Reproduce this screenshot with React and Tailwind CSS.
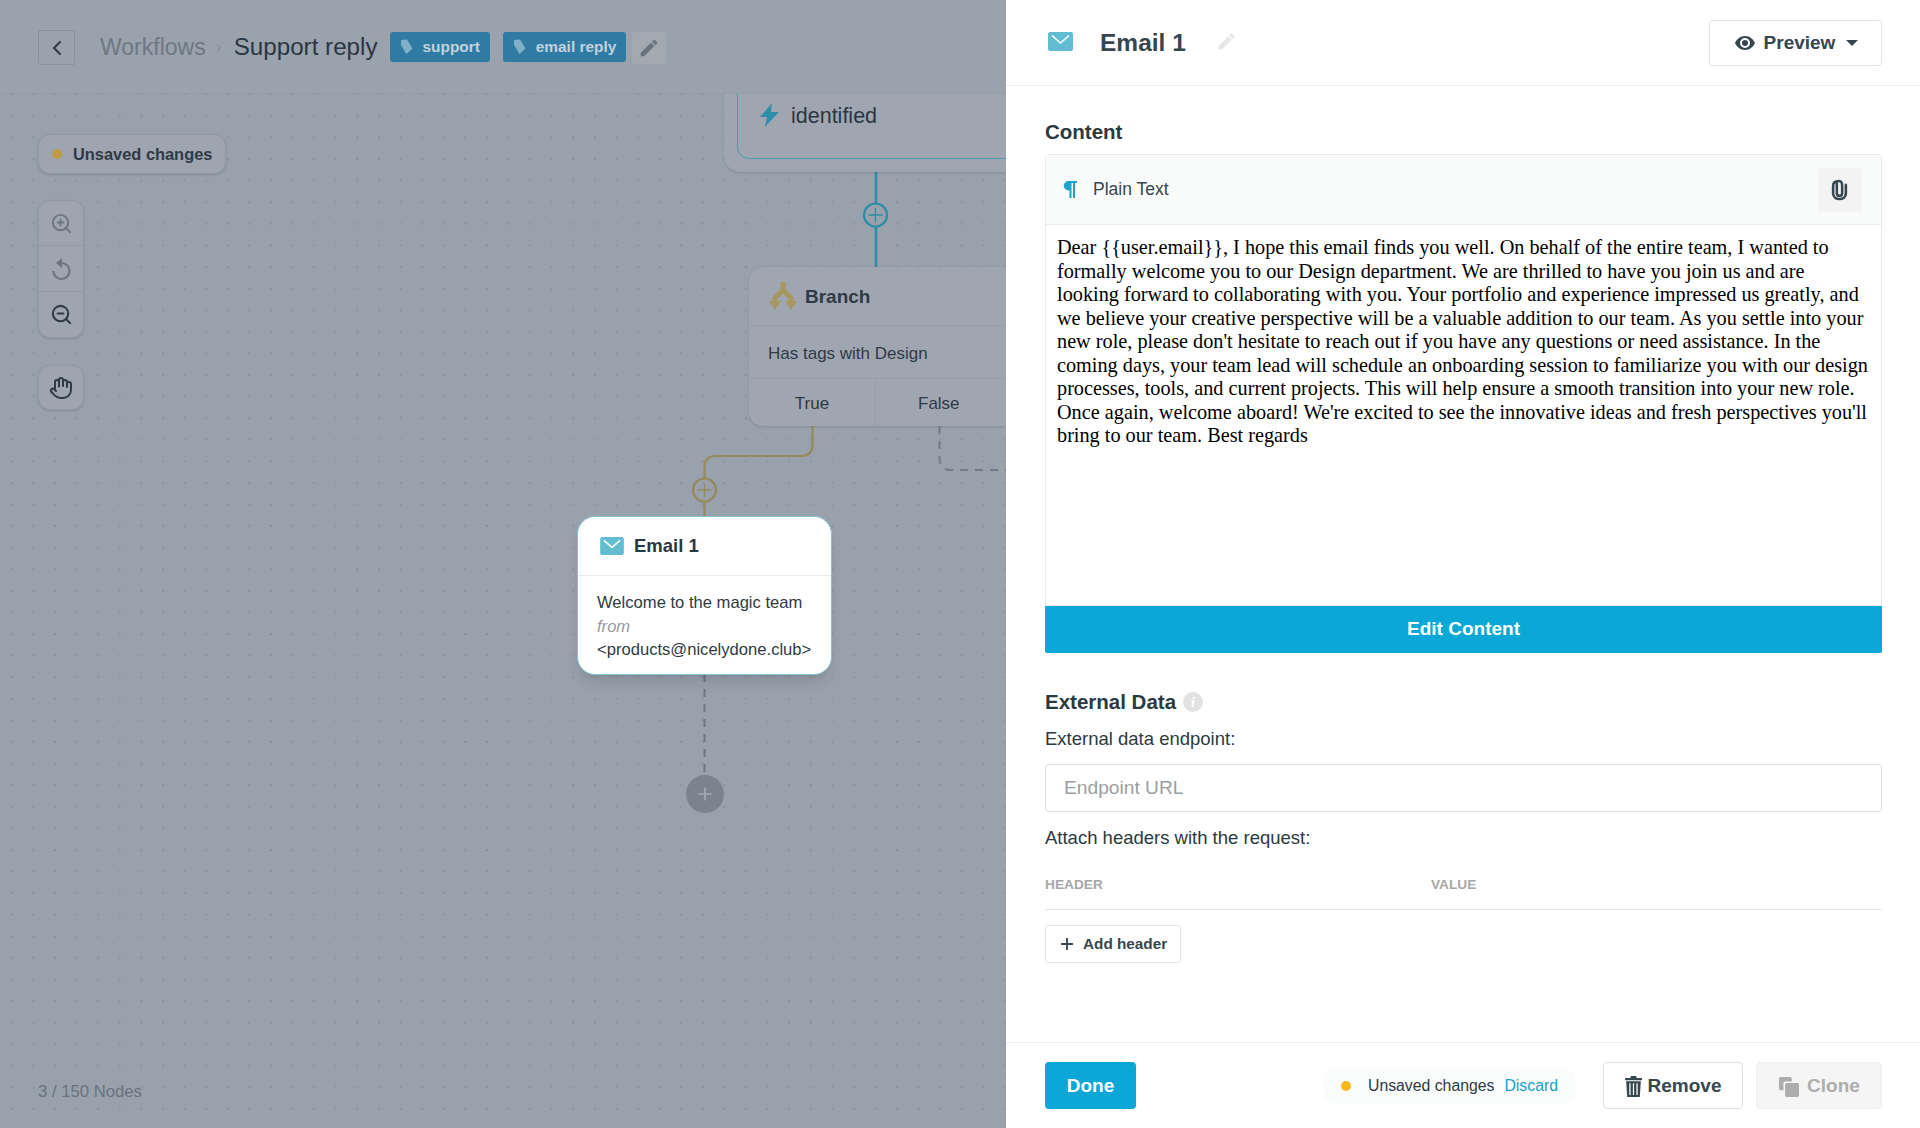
import React from 'react';
import { ChevronLeft, ChevronRight, Hand, Plus, ZoomIn, ZoomOut } from 'lucide-react';
import { MdEdit } from 'react-icons/md';

const Envelope = ({ className }) => (
    <svg className={className} viewBox="0 0 25 19">
        <rect width="25" height="19" rx="2" fill="#62bdd3" />
        <path d="M4 3.5 L12.5 11 L21 3.5" fill="none" stroke="#fff" strokeWidth="1.6" />
    </svg>
);

const Tag = () => (
    <svg className="w-[13px] h-[16px]" viewBox="0 0 13 16">
        <path d="M1 1 L7 0.5 L12.5 9.5 L6.5 15 L1 6 Z" fill="#83b0c9" />
    </svg>
);

const TagBadge = ({ children }) => (
    <div className="h-[30px] px-[10px] flex items-center gap-[10px] rounded-[3px] bg-[#2f7ba3] text-[15.4px] font-bold text-[#c2d2dd]">
        <Tag />
        {children}
    </div>
);

const Trash = () => (
    <svg className="w-[17px] h-[21px]" viewBox="0 0 16 20" fill="#37474f">
        <path d="M5.5 0 H10.5 L11 2 H16 V4 H0 V2 H5 Z" />
        <path d="M1 5 H15 L14 20 H2 Z M4 7 V18 H5.2 V7 Z M7.4 7 V18 H8.6 V7 Z M10.8 7 V18 H12 V7 Z" fillRule="evenodd" />
    </svg>
);

const BODY = "Dear {{user.email}}, I hope this email finds you well. On behalf of the entire team, I wanted to formally welcome you to our Design department. We are thrilled to have you join us and are looking forward to collaborating with you. Your portfolio and experience impressed us greatly, and we believe your creative perspective will be a valuable addition to our team. As you settle into your new role, please don't hesitate to reach out if you have any questions or need assistance. In the coming days, your team lead will schedule an onboarding session to familiarize you with our design processes, tools, and current projects. This will help ensure a smooth transition into your new role. Once again, welcome aboard! We're excited to see the innovative ideas and fresh perspectives you'll bring to our team. Best regards";

const Canvas = () => (
    <div className="relative w-[1006px] h-[1128px] shrink-0 overflow-hidden flex flex-col bg-[#99a1ac] bg-[radial-gradient(circle,#8a929e_1px,transparent_1.2px)] bg-[size:21.6px_21.6px] bg-[position:1px_-3px]">
        {/* Top bar */}
        <div className="relative z-10 h-[94px] shrink-0 flex items-center pl-[38px] pt-[2px] bg-[#9aa2ad] border-b border-[#959da8]">
            <button className="w-[37px] h-[35px] flex items-center justify-center border border-[#8a929e] rounded-[2px] text-[#2f3a46]">
                <ChevronLeft size={24} strokeWidth={2} />
            </button>
            <span className="ml-[25px] text-[23px] text-[#6f7783]">Workflows</span>
            <ChevronRight size={12} className="ml-[7px] text-[#7d8590]" />
            <span className="ml-[9px] text-[24.2px] text-[#2b3642]">Support reply</span>
            <div className="ml-[12px] -mt-[2px] flex items-center gap-[13px]">
                <TagBadge>support</TagBadge>
                <TagBadge>email reply</TagBadge>
            </div>
            <button className="ml-[6px] w-[34px] h-[32px] flex items-center justify-center rounded-[3px] bg-[#a3a9b2] text-[#6a727d]">
                <MdEdit size={22} />
            </button>
        </div>

        {/* Left tools */}
        <div className="flex-1 flex flex-col items-start pl-[38px] pt-[40px] pb-[26px]">
            <div className="h-[40px] w-[188px] flex items-center gap-[11px] pl-[13px] rounded-[12px] bg-[#9ea5b0] border border-[#929aa5] shadow-sm">
                <span className="w-[10px] h-[10px] rounded-full bg-[#bf9b45]" />
                <span className="text-[16.4px] font-bold text-[#2f3a46] whitespace-nowrap">Unsaved changes</span>
            </div>
            <div className="mt-[26px] w-[46px] rounded-[12px] bg-[#9ea5b0] border border-[#929aa5] shadow-sm flex flex-col">
                <div className="h-[45px] flex items-center justify-center text-[#6d7581] border-b border-[#929aa5]">
                    <ZoomIn size={23} strokeWidth={2} />
                </div>
                <div className="h-[46px] flex items-center justify-center border-b border-[#929aa5]">
                    <svg className="w-[22px] h-[24px]" viewBox="0 0 22 24" fill="none">
                        <path d="M11 6 A8 8 0 1 1 3.5 14" stroke="#6d7581" strokeWidth="2.2" />
                        <path d="M12 1 L6 6 L12 11 Z" fill="#6d7581" />
                    </svg>
                </div>
                <div className="h-[45px] flex items-center justify-center text-[#2f3a46]">
                    <ZoomOut size={23} strokeWidth={2.2} />
                </div>
            </div>
            <div className="mt-[27px] w-[46px] h-[45px] rounded-[12px] bg-[#9ea5b0] border border-[#929aa5] shadow-sm flex items-center justify-center text-[#2f3a46]">
                <Hand size={24} strokeWidth={2} />
            </div>
            <span className="mt-auto text-[16.7px] leading-[20px] text-[#6a727e]">3 / 150 Nodes</span>
        </div>

        {/* Connectors */}
        <svg className="absolute left-0 top-0 w-[1006px] h-[1128px]" viewBox="0 0 1006 1128" fill="none">
            <path d="M876 172 V203 M876 227 V267" stroke="#2d8ca6" strokeWidth="2.5" />
            <circle cx="875.5" cy="215" r="11.5" stroke="#2d8ca6" strokeWidth="2.2" />
            <path d="M875.5 208 V222 M868.5 215 H882.5" stroke="#2d8ca6" strokeWidth="1.3" />
            <path d="M812.5 426 V445 Q812.5 456 801 456 H716 Q704.5 456 704.5 467 V478 M704.5 502 V516" stroke="#948a5c" strokeWidth="2.2" />
            <circle cx="704.5" cy="490" r="11.5" stroke="#948a5c" strokeWidth="2.2" />
            <path d="M704.5 483 V497 M697.5 490 H711.5" stroke="#948a5c" strokeWidth="1.3" />
            <path d="M939.5 426 V458 Q939.5 470 951 470 H1006" stroke="#737b87" strokeWidth="2" strokeDasharray="8 7" />
            <path d="M704.5 674 V775" stroke="#6f7783" strokeWidth="2" strokeDasharray="8 7" />
        </svg>

        {/* Nodes */}
        <div className="absolute left-[724px] top-[40px] w-[400px] h-[132px] rounded-[16px] bg-[#9fa6b1] shadow-sm">
            <div className="absolute left-[13px] top-[-20px] bottom-[13px] right-0 rounded-[12px] border border-[#4d98b2]" />
            <svg className="absolute left-[36px] top-[63px] w-[19px] h-[24px]" viewBox="0 0 19 24">
                <path d="M12 0 L0 14 H7 L5 24 L19 9 H11 Z" fill="#2f8fab" />
            </svg>
            <span className="absolute left-[67px] top-[63px] text-[21.5px] leading-[26px] text-[#2b3642]">identified</span>
        </div>

        <div className="absolute left-[749px] top-[267px] w-[257px] h-[159px] rounded-l-[14px] bg-[#9fa6b1] shadow-sm flex flex-col text-[#2f3a46]">
            <div className="h-[59px] flex items-center pl-[20px] pt-[3px] gap-[8px] border-b border-[#959da8]">
                <svg className="w-[28px] h-[30px] -mt-[3px]" viewBox="0 0 28 30" fill="#a8965f">
                    <path d="M14 1 V9 M14 9 L6 17 V21 M14 9 L22 17 V21" fill="none" stroke="#a8965f" strokeWidth="5" />
                    <path d="M0 20 H12 L6 29 Z M16 20 H28 L22 29 Z" />
                </svg>
                <span className="text-[19px] font-bold">Branch</span>
            </div>
            <div className="h-[53px] flex items-center pl-[19px] pt-[3px] text-[17px] border-b border-[#959da8]">Has tags with Design</div>
            <div className="flex-1 flex pt-[2px] text-[17px]">
                <div className="w-[127px] flex items-center justify-center border-r border-[#959da8]">True</div>
                <div className="flex-1 flex items-center pl-[42px]">False</div>
            </div>
        </div>

        <div className="absolute left-[577px] top-[516px] w-[255px] h-[159px] rounded-[18px] bg-white border border-[#7fc6d0] shadow-lg flex flex-col">
            <div className="h-[59px] shrink-0 flex items-center pl-[22px] gap-[10px] border-b border-[#e8eaec]">
                <Envelope className="w-[24px] h-[18px]" />
                <span className="text-[18.5px] font-bold text-[#2b3640]">Email 1</span>
            </div>
            <div className="pl-[19px] pt-[15px] text-[16.6px] leading-[23.5px] text-[#2f3a42] whitespace-nowrap">
                <div>Welcome to the magic team</div>
                <div className="italic text-[#9a9a9a]">from</div>
                <div>{'<products@nicelydone.club>'}</div>
            </div>
        </div>

        <div className="absolute left-[685.5px] top-[775px] w-[38px] h-[38px] rounded-full bg-[#7b838f] flex items-center justify-center text-[#a4abb4]">
            <Plus size={20} strokeWidth={2} />
        </div>
    </div>
);

const Panel = () => (
    <div className="flex-1 h-[1128px] bg-white flex flex-col text-[#2b3a40]">
        {/* Header */}
        <div className="h-[86px] shrink-0 flex items-center pl-[42px] pr-[38px] border-b border-[#ececec]">
            <Envelope className="w-[25px] h-[19px] -mt-[2px]" />
            <span className="ml-[27px] text-[24.5px] font-bold text-[#37474f] mt-[1px]">Email 1</span>
            <MdEdit size={21} className="ml-[30px] -mt-[3px] text-[#e6e6e6]" />
            <button className="ml-auto w-[173px] h-[46px] flex items-center justify-center gap-[9px] bg-white border border-[#e2e4e5] rounded-[4px] text-[#37474f]">
                <svg className="w-[20px] h-[14px] ml-[2px]" viewBox="0 0 20 14">
                    <path d="M10 0 C15 0 18.5 3.5 20 7 C18.5 10.5 15 14 10 14 C5 14 1.5 10.5 0 7 C1.5 3.5 5 0 10 0 Z M10 2 A5 5 0 1 0 10 12 A5 5 0 1 0 10 2 Z" fill="#37474f" fillRule="evenodd" />
                    <circle cx="10" cy="7" r="3" fill="#37474f" />
                </svg>
                <span className="text-[19px] font-bold mt-[1px]">Preview</span>
                <span className="ml-[2px] w-0 h-0 border-x-[6px] border-x-transparent border-t-[6px] border-t-[#37474f]" />
            </button>
        </div>

        {/* Form */}
        <div className="flex-1 pl-[39px] pr-[38px] pt-[34px] flex flex-col">
            <h2 className="text-[20.5px] leading-[24px] font-bold">Content</h2>
            <div className="mt-[10px] border border-[#e9eaeb] rounded-t-[4px] flex flex-col">
                <div className="h-[70px] flex items-center pl-[17px] pr-[19px] bg-[#f9fafa] border-b border-[#e9eaeb]">
                    <svg className="w-[14px] h-[17px]" viewBox="0 0 14 17" fill="#1ea3cf">
                        <path d="M5.5 0 H14 V2 H12 V17 H10 V2 H8.5 V17 H6.5 V9.5 H5.5 A4.75 4.75 0 0 1 5.5 0 Z" />
                    </svg>
                    <span className="ml-[16px] text-[17.5px] text-[#37474f]">Plain Text</span>
                    <button className="ml-auto w-[44px] h-[44px] flex items-center justify-center rounded-[4px] bg-[#f3f3f3]">
                        <svg className="w-[17px] h-[22px] -ml-[1px]" viewBox="0 0 16 20" fill="none" stroke="#37474f" strokeWidth="2.4" strokeLinecap="round">
                            <path d="M5.5 4 V13 C5.5 14.5 6.5 15.5 8 15.5 C9.5 15.5 10.5 14.5 10.5 13 V6 C10.5 3 9.5 1.5 7.5 1.5 C4 1.5 2 3 2 6 V13 C2 16.5 4.5 18.5 8 18.5 C11.5 18.5 14 16.5 14 13 V5" />
                        </svg>
                    </button>
                </div>
                <div className="h-[380px] px-[11px] pt-[11px] font-['Liberation_Serif',serif] text-[20.26px] leading-[23.5px] text-black">
                    {BODY}
                </div>
            </div>
            <button className="h-[47px] shrink-0 bg-[#0ba7d6] rounded-b-[2px] text-white text-[19px] font-bold">Edit Content</button>

            <div className="mt-[37px] flex items-center gap-[7px]">
                <h2 className="text-[20.5px] leading-[24px] font-bold">External Data</h2>
                <span className="w-[20px] h-[20px] rounded-full bg-[#e2e2e2] flex items-center justify-center text-white text-[14px] italic font-bold font-['Liberation_Serif',serif]">i</span>
            </div>
            <label className="mt-[14px] text-[18.5px] leading-[22px]">External data endpoint:</label>
            <input
                placeholder="Endpoint URL"
                className="mt-[14px] h-[48px] shrink-0 w-full px-[18px] border border-[#dedfe0] rounded-[4px] text-[19.2px] placeholder:text-[#9b9fa1] outline-none"
            />
            <label className="mt-[15px] text-[18.5px] leading-[22px]">Attach headers with the request:</label>
            <div className="mt-[28px] h-[33px] flex border-b border-[#e4e5e6] text-[13.7px] leading-[16px] font-bold text-[#a5a7a8]">
                <span className="w-[386px]">HEADER</span>
                <span>VALUE</span>
            </div>
            <button className="mt-[15px] w-[136px] h-[38px] flex items-center gap-[7px] pl-[12px] border border-[#e2e4e5] rounded-[3px] text-[15.3px] font-bold text-[#37474f]">
                <Plus size={18} strokeWidth={2.5} />
                Add header
            </button>
        </div>

        {/* Footer */}
        <div className="h-[86px] shrink-0 flex items-center pl-[39px] pr-[38px] border-t border-[#ececec]">
            <button className="w-[91px] h-[47px] pt-[2px] rounded-[4px] bg-[#0ba7d6] text-white text-[19px] font-bold">Done</button>
            <div className="ml-auto h-[36px] flex items-center pl-[18px] pr-[18px] rounded-[14px] bg-[#fafbfb] text-[15.8px] whitespace-nowrap">
                <span className="w-[10px] h-[10px] rounded-full bg-[#fbb81b]" />
                <span className="ml-[17px] text-[#2f3a42]">Unsaved changes</span>
                <span className="ml-[10px] text-[#1a9fcc]">Discard</span>
            </div>
            <button className="ml-[27px] w-[140px] h-[47px] pt-[2px] flex items-center justify-center gap-[6px] bg-white border border-[#dedfe0] rounded-[4px] text-[19px] font-bold text-[#37474f]">
                <Trash />
                Remove
            </button>
            <button className="ml-[13px] w-[126px] h-[47px] pt-[2px] pl-[4px] flex items-center justify-center gap-[8px] bg-[#f5f5f5] border border-[#eeeeee] rounded-[4px] text-[19px] font-bold text-[#adadad]">
                <svg className="w-[20px] h-[20px] -ml-[3px]" viewBox="0 0 18 18" fill="#adadad">
                    <path d="M0 1.5 A1.5 1.5 0 0 1 1.5 0 H10 A1.5 1.5 0 0 1 11.5 1.5 V4 H5.5 A1.5 1.5 0 0 0 4 5.5 V12 H1.5 A1.5 1.5 0 0 1 0 10.5 Z" />
                    <rect x="5.5" y="5.5" width="12.5" height="12.5" rx="1.5" />
                </svg>
                Clone
            </button>
        </div>
    </div>
);

const App = () => {
    return (
        <div className="w-[1920px] h-[1128px] flex overflow-hidden font-['Liberation_Sans',Arial,sans-serif]">
            <Canvas />
            <Panel />
        </div>
    );
};

export default App;
